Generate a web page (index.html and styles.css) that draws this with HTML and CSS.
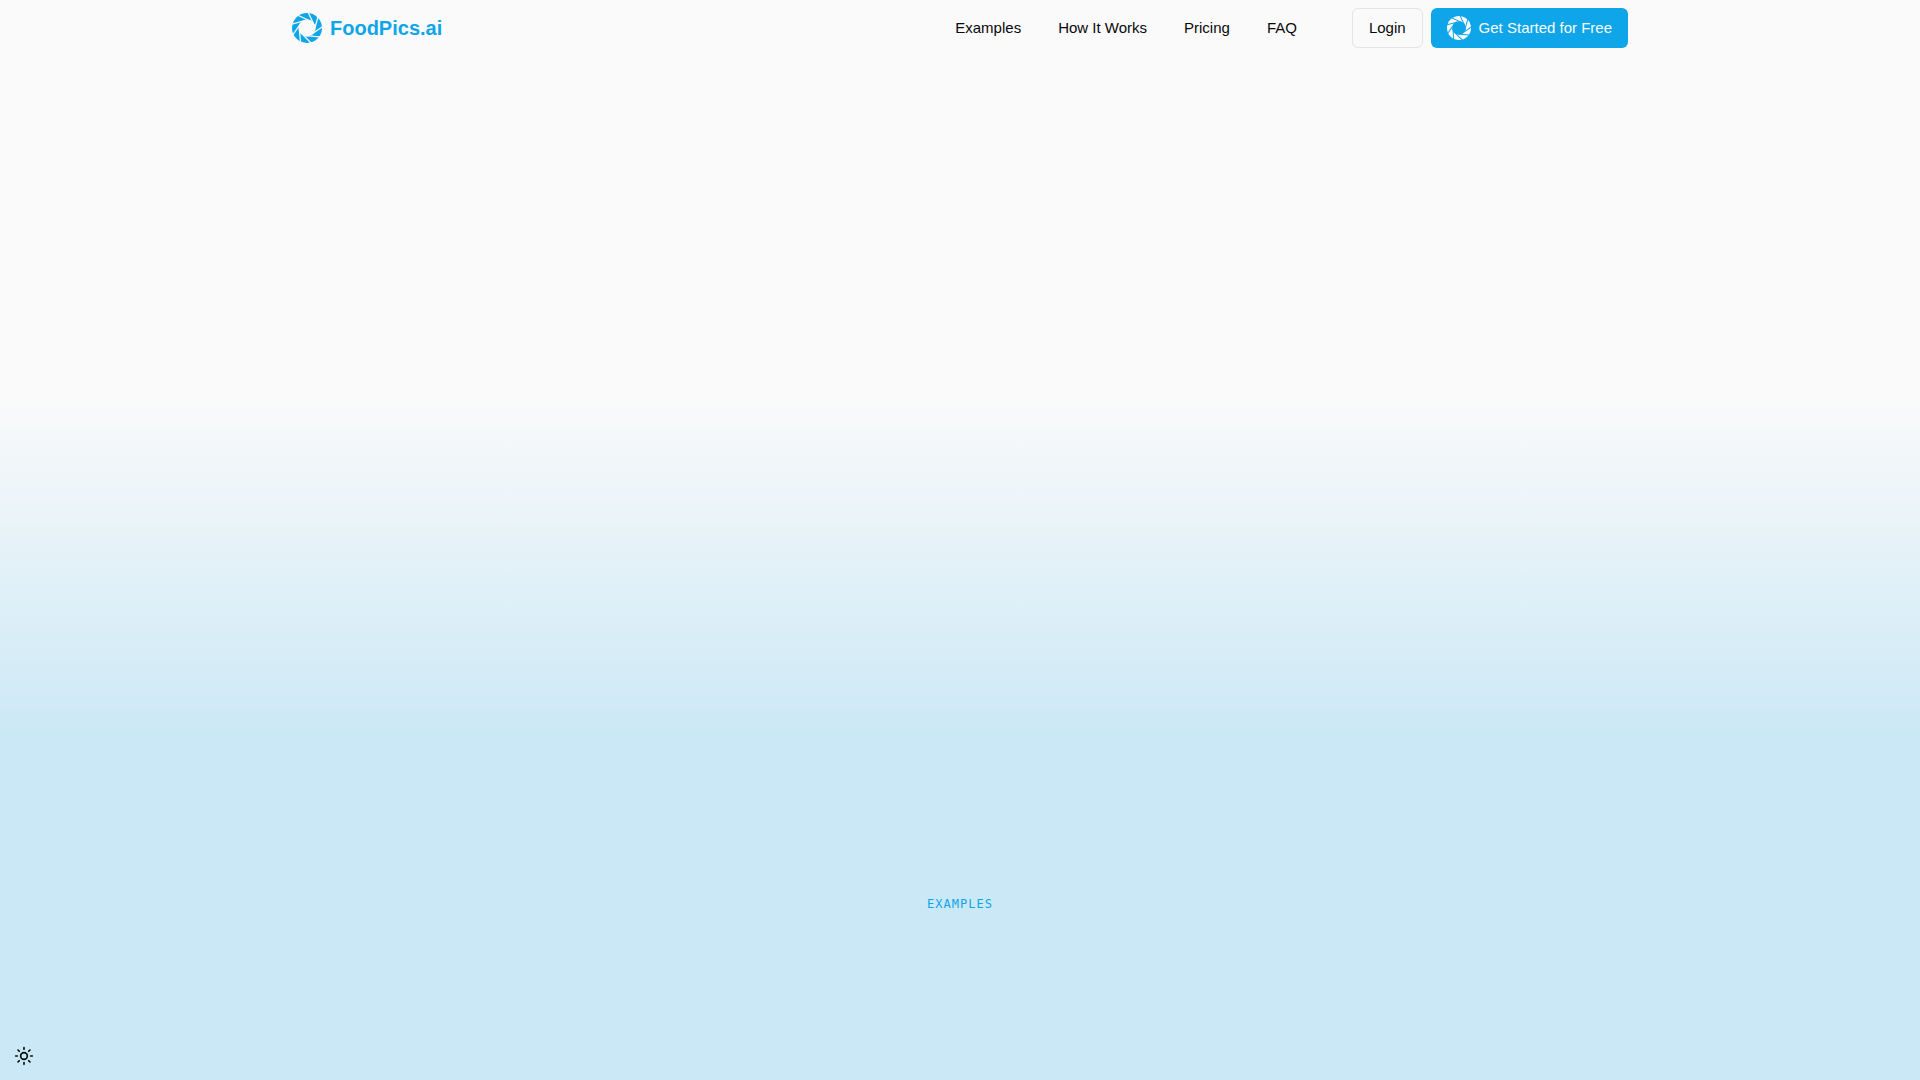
FILE: index.html
```html
<!DOCTYPE html>
<html lang="en">
<head>
    <meta charset="UTF-8">
    <meta name="viewport" content="width=device-width, initial-scale=1.0">
    <title>FoodPics.ai</title>
    <link rel="stylesheet" href="styles.css">
</head>
<body>
    <!-- shared shutter shape -->
    <svg class="defs" aria-hidden="true">
        <defs>
            <symbol id="aperture" viewBox="0 0 24 24">
                <mask id="cuts">
                    <circle cx="12" cy="12" r="12" fill="white"/>
                    <circle cx="12" cy="12" r="6.8" fill="black"/>
                    <g stroke="black" stroke-width="1">
                        <path id="cut" d="M3 1 L15 6.6"/>
                        <use href="#cut" transform="rotate(40 12 12)"/>
                        <use href="#cut" transform="rotate(80 12 12)"/>
                        <use href="#cut" transform="rotate(120 12 12)"/>
                        <use href="#cut" transform="rotate(160 12 12)"/>
                        <use href="#cut" transform="rotate(200 12 12)"/>
                        <use href="#cut" transform="rotate(240 12 12)"/>
                        <use href="#cut" transform="rotate(280 12 12)"/>
                        <use href="#cut" transform="rotate(320 12 12)"/>
                    </g>
                </mask>
                <rect width="24" height="24" fill="currentColor" mask="url(#cuts)"/>
            </symbol>
        </defs>
    </svg>

    <header class="header">
        <div class="container">
            <a class="logo" href="#">
                <svg class="logo-icon" aria-hidden="true"><use href="#aperture"/></svg>
                FoodPics.ai
            </a>
            <nav class="nav">
                <a href="#examples">Examples</a>
                <a href="#how-it-works">How It Works</a>
                <a href="#pricing">Pricing</a>
                <a href="#faq">FAQ</a>
            </nav>
            <div class="actions">
                <button type="button" class="btn btn-outline">Login</button>
                <button type="button" class="btn btn-primary">
                    <svg class="btn-icon" aria-hidden="true"><use href="#aperture"/></svg>
                    Get Started for Free
                </button>
            </div>
        </div>
    </header>

    <main>
        <section class="hero"></section>
        <section class="examples" id="examples">
            <h2 class="eyebrow">Examples</h2>
        </section>
    </main>

    <button type="button" class="theme-toggle" aria-label="Toggle theme">
        <svg viewBox="0 0 24 24" fill="none" stroke="currentColor" stroke-width="2" stroke-linecap="round" stroke-linejoin="round" aria-hidden="true">
            <circle cx="12" cy="12" r="4"/>
            <path d="M12 2v2M12 20v2M4.93 4.93l1.41 1.41M17.66 17.66l1.41 1.41M2 12h2M20 12h2M6.34 17.66l-1.41 1.41M19.07 4.93l-1.41 1.41"/>
        </svg>
    </button>
</body>
</html>
```
FILE: styles.css
```css
* {
    box-sizing: border-box;
}

body {
    margin: 0;
    min-height: 100vh;
    font-family: "Liberation Sans", Arial, sans-serif;
    font-size: 15px;
    line-height: 24px;
    color: #09090b;
    background: #cbe8f6;
}

a {
    color: inherit;
    text-decoration: none;
}

.defs {
    position: absolute;
    width: 0;
    height: 0;
}

/* header */
.header {
    background: #fafafa;
}

.container {
    display: flex;
    align-items: center;
    max-width: 1400px;
    margin: 0 auto;
    padding: 8px 32px;
}

.logo {
    display: flex;
    align-items: center;
    gap: 8px;
    margin-right: auto;
    font-size: 20px;
    font-weight: bold;
    color: #0ea5e9;
}

.logo-icon {
    width: 30px;
    height: 30px;
}

.nav {
    display: flex;
    gap: 37px;
    margin-right: 55px;
}

.actions {
    display: flex;
    gap: 8px;
}

.btn {
    display: flex;
    align-items: center;
    gap: 8px;
    height: 40px;
    padding: 0 16px;
    border: 1px solid transparent;
    border-radius: 6px;
    font: inherit;
    cursor: pointer;
}

.btn-outline {
    color: #09090b;
    background: #fafafa;
    border-color: #e4e4e7;
}

.btn-primary {
    color: #fafafa;
    background: #0ea5e9;
    border: none;
}

.btn-icon {
    width: 24px;
    height: 24px;
}

/* sections */
.hero {
    height: 684px;
    background: linear-gradient(to bottom, #fafafa 50%, #cbe8f6 100%);
}

.examples {
    padding: 152px 32px;
    text-align: center;
}

.eyebrow {
    margin: 0;
    font-family: "DejaVu Sans Mono", monospace;
    font-size: 12px;
    font-weight: normal;
    letter-spacing: 1px;
    text-transform: uppercase;
    color: #0ea5e9;
}

/* floating theme switch */
.theme-toggle {
    position: fixed;
    left: 4px;
    bottom: 4px;
    display: flex;
    align-items: center;
    justify-content: center;
    width: 40px;
    height: 40px;
    padding: 0;
    border: none;
    color: #09090b;
    background: none;
    cursor: pointer;
}

.theme-toggle svg {
    width: 20px;
    height: 20px;
}
```
